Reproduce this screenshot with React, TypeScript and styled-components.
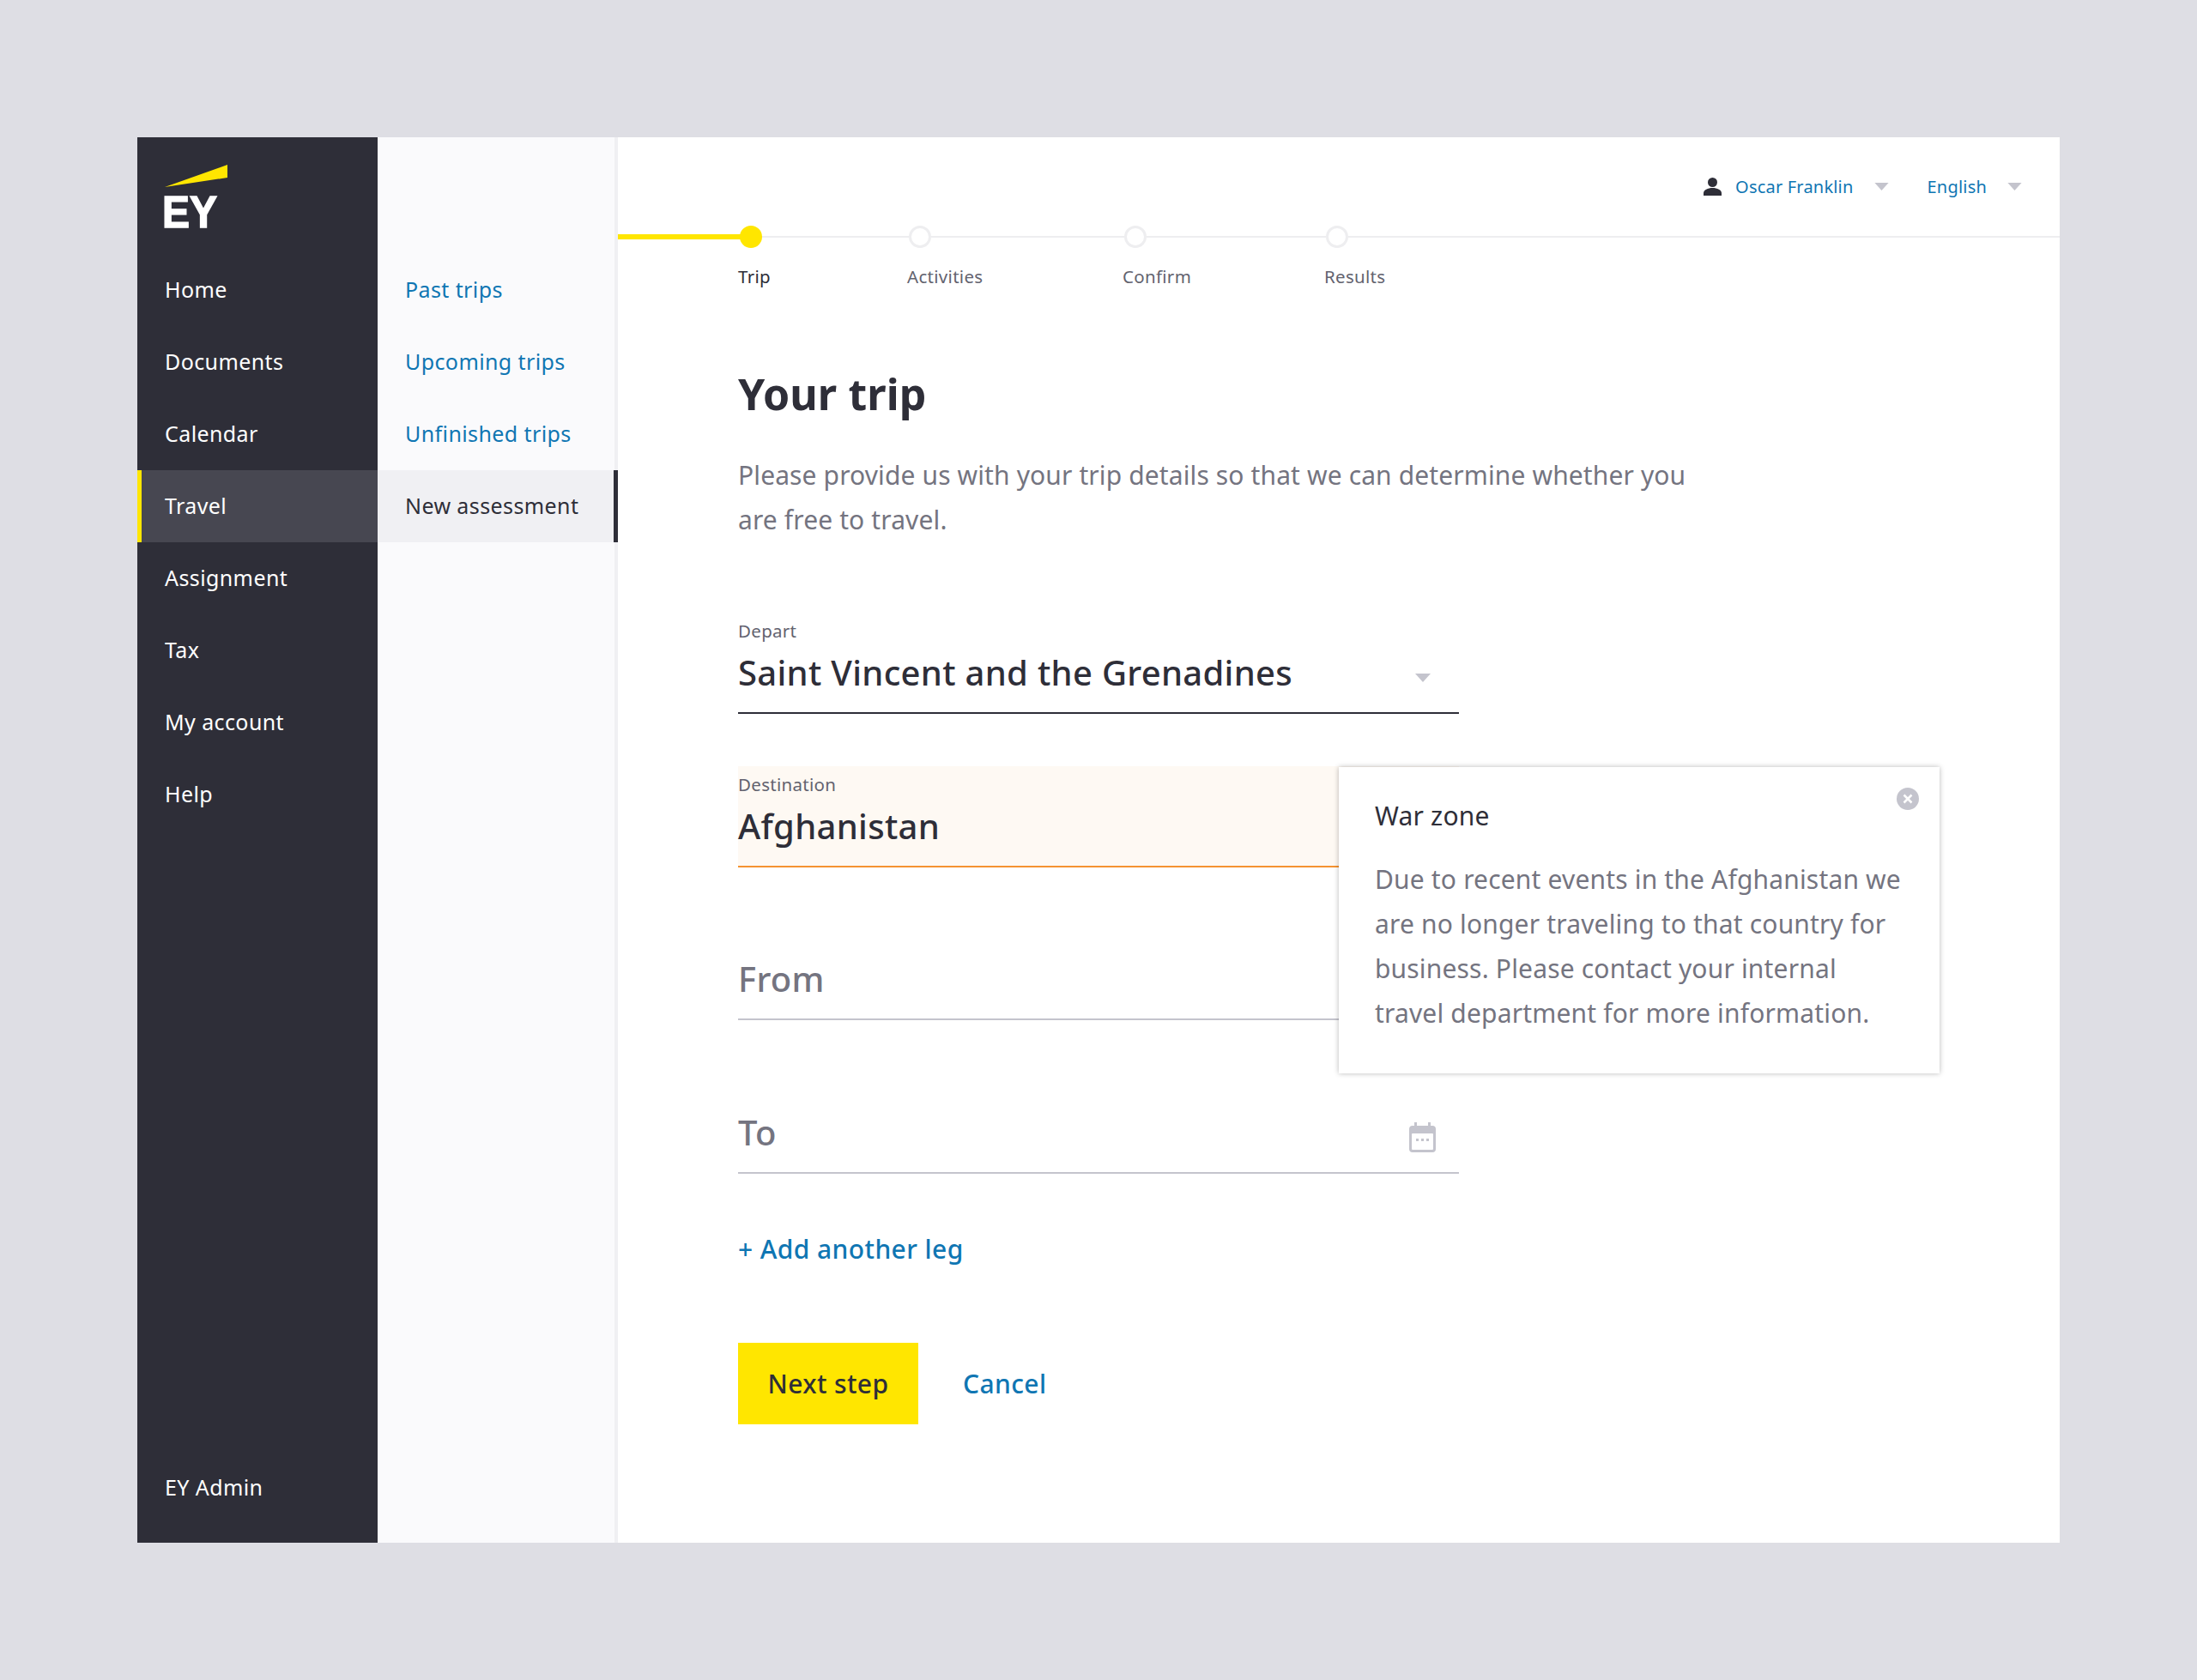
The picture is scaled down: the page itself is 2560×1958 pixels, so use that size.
import React, { ReactElement } from 'react'
import styled, { createGlobalStyle } from 'styled-components'

const GlobalStyle = createGlobalStyle`
  html, body {
    margin: 0;
    padding: 0;
    background: #dedee4;
    font-family: "Noto Sans", "Open Sans", sans-serif;
  }
  * { box-sizing: border-box; }
`

const Page = styled.div`
  width: 2560px;
  height: 1958px;
  padding: 160px;
  background: #dedee4;
`

const Frame = styled.div`
  display: flex;
  height: 1638px;
  background: #fff;
`

const Sidebar = styled.nav`
  display: flex;
  flex-direction: column;
  flex: 0 0 280px;
  padding: 32px 0 22px;
  background: #2e2e38;
`

const Logo = styled.svg`
  display: block;
  width: 76px;
  height: 74px;
  margin: 0 0 30px 30px;
  overflow: visible;
`

const SideItem = styled.a<{ $active?: boolean; $bottom?: boolean }>`
  display: flex;
  align-items: center;
  height: 84px;
  padding: 0 0 2px ${p => (p.$active ? '27px' : '32px')};
  margin-top: ${p => (p.$bottom ? 'auto' : '0')};
  border-left: ${p => (p.$active ? '5px solid #ffe600' : 'none')};
  background: ${p => (p.$active ? '#474751' : 'transparent')};
  color: #fff;
  font-size: 25px;
  letter-spacing: 0.4px;
`

const SubNav = styled.nav`
  flex: 0 0 280px;
  padding-top: 136px;
  border-right: 4px solid #f0f0f3;
  background: #fafafc;
`

const SubItem = styled.a<{ $active?: boolean }>`
  display: flex;
  align-items: center;
  height: 84px;
  padding: 0 0 2px 32px;
  margin-right: ${p => (p.$active ? '-4px' : '0')};
  border-right: ${p => (p.$active ? '5px solid #2e2e38' : 'none')};
  background: ${p => (p.$active ? '#f0f0f3' : 'transparent')};
  color: ${p => (p.$active ? '#2e2e38' : '#0f76b3')};
  font-size: 25px;
  letter-spacing: 0.4px;
`

const Main = styled.main`
  flex: 1;
  min-width: 0;
`

const TopBar = styled.div`
  display: flex;
  align-items: center;
  justify-content: flex-end;
  height: 115px;
  padding-right: 44px;
`

const UserIcon = styled.svg`
  width: 21px;
  height: 21px;
  margin-right: 16px;
`

const TopLink = styled.a`
  color: #0f76b3;
  font-size: 20px;
  letter-spacing: 0.2px;
`

const TopCaret = styled.svg<{ $gapAfter?: number }>`
  width: 17px;
  height: 9px;
  margin-left: 24px;
  margin-right: ${p => p.$gapAfter ?? 0}px;
`

const Stepper = styled.div`
  position: relative;
  display: grid;
  grid-template-columns: 197px 251px 235px auto;
  padding-left: 140px;
  border-top: 2px solid #eeeef0;
`

const Progress = styled.div`
  position: absolute;
  left: 0;
  top: -4px;
  width: 150px;
  height: 6px;
  background: #ffe600;
`

const Step = styled.div`
  display: flex;
  flex-direction: column;
  align-items: flex-start;
`

const Dot = styled.span<{ $done?: boolean }>`
  position: relative;
  width: 26px;
  height: 26px;
  margin: -14px 0 0 2px;
  border-radius: 50%;
  border: 3px solid ${p => (p.$done ? '#ffe600' : '#eeeef0')};
  background: ${p => (p.$done ? '#ffe600' : '#fff')};
`

const StepLabel = styled.span<{ $done?: boolean }>`
  margin-top: 18px;
  color: ${p => (p.$done ? '#2e2e38' : '#63636f')};
  font-size: 20.5px;
  line-height: 30px;
  letter-spacing: 0.3px;
`

const Content = styled.div`
  position: relative;
  padding-left: 140px;
`

const Title = styled.h1`
  margin: 90px 0 0;
  color: #2e2e38;
  font-size: 50px;
  font-weight: 700;
  line-height: 64px;
  letter-spacing: 0.1px;
`

const Intro = styled.p`
  width: 1120px;
  margin: 37px 0 82px;
  color: #747480;
  font-size: 30px;
  line-height: 52px;
  letter-spacing: 0.12px;
`

const Field = styled.div<{ $tone?: 'dark' | 'warn' | 'empty' }>`
  display: flex;
  align-items: flex-end;
  justify-content: space-between;
  width: 840px;
  height: 118px;
  margin-bottom: 60.5px;
  border-bottom: 2px solid
    ${p => (p.$tone === 'dark' ? '#2e2e38' : p.$tone === 'warn' ? '#f59331' : '#c4c4cd')};
  background: ${p => (p.$tone === 'warn' ? '#fef9f3' : 'transparent')};
`

const FieldText = styled.div`
  display: flex;
  flex-direction: column;
  padding-bottom: 18px;
`

const FieldLabel = styled.span`
  color: #63636f;
  font-size: 20.5px;
  line-height: 30px;
  letter-spacing: 0.3px;
`

const FieldValue = styled.span<{ $empty?: boolean }>`
  margin-top: 6px;
  color: ${p => (p.$empty ? '#747480' : '#2e2e38')};
  font-size: 40px;
  font-weight: 500;
  line-height: 56px;
  letter-spacing: 0.3px;
`

const SelectCaret = styled.svg`
  width: 18px;
  height: 10px;
  margin: 0 33px 35px 0;
`

const CalendarIcon = styled.svg`
  width: 31px;
  height: 35px;
  margin: 0 27px 23px 0;
`

const AddLeg = styled.a`
  display: block;
  margin-top: 66px;
  color: #0f76b3;
  font-size: 30px;
  font-weight: 500;
  line-height: 44px;
  letter-spacing: 0.4px;
`

const Actions = styled.div`
  display: flex;
  align-items: center;
  gap: 52px;
  margin-top: 87px;
`

const PrimaryButton = styled.button`
  width: 210px;
  height: 95px;
  border: 0;
  background: #ffe600;
  color: #2e2e38;
  font-family: inherit;
  font-size: 30px;
  font-weight: 500;
  letter-spacing: 0.4px;
`

const CancelLink = styled.a`
  color: #0f76b3;
  font-size: 30px;
  font-weight: 500;
  letter-spacing: 0.4px;
`

const Popover = styled.aside`
  position: absolute;
  left: 840px;
  top: 467px;
  width: 700px;
  height: 357px;
  padding: 31px 40px 0 42px;
  background: #fff;
  box-shadow: 0 0 6px rgba(0, 0, 0, 0.28);
`

const PopoverTitle = styled.h2`
  margin: 0;
  color: #2e2e38;
  font-size: 30px;
  font-weight: 400;
  line-height: 52px;
  letter-spacing: 0.2px;
`

const PopoverBody = styled.p`
  margin: 22px 0 0;
  color: #747480;
  font-size: 30px;
  line-height: 52px;
  letter-spacing: 0.17px;
`

const CloseIcon = styled.svg`
  position: absolute;
  top: 24px;
  right: 24px;
  width: 26px;
  height: 26px;
`

const sideItems = ['Home', 'Documents', 'Calendar', 'Travel', 'Assignment', 'Tax', 'My account', 'Help']
const subItems = ['Past trips', 'Upcoming trips', 'Unfinished trips', 'New assessment']
const steps = ['Trip', 'Activities', 'Confirm', 'Results']

const Triangle = (): ReactElement => <polygon points='0,0 18,0 9,10' fill='#c4c4cd' />

const App = (): ReactElement => {
  return (
    <Page>
      <GlobalStyle />
      <Frame>
        <Sidebar>
          <Logo viewBox='0 0 76 74'>
            <polygon points='2,26 75,0 75,15' fill='#ffe600' />
            <text
              x='-1'
              y='73'
              fill='#fff'
              stroke='#fff'
              strokeWidth='1.5'
              fontFamily='"Liberation Sans", sans-serif'
              fontSize='52'
              fontWeight='700'
              textLength='64'
              lengthAdjust='spacingAndGlyphs'
            >
              EY
            </text>
          </Logo>
          {sideItems.map(item => (
            <SideItem key={item} $active={item === 'Travel'}>{item}</SideItem>
          ))}
          <SideItem $bottom>EY Admin</SideItem>
        </Sidebar>
        <SubNav>
          {subItems.map(item => (
            <SubItem key={item} $active={item === 'New assessment'}>{item}</SubItem>
          ))}
        </SubNav>
        <Main>
          <TopBar>
            <UserIcon viewBox='0 0 21 21'>
              <circle cx='10.5' cy='5.5' r='5.5' fill='#2e2e38' />
              <path d='M0 21v-3c0-3.5 5-6 10.5-6S21 14.500 21 18v3z' fill='#2e2e38' />
            </UserIcon>
            <TopLink>Oscar Franklin</TopLink>
            <TopCaret viewBox='0 0 18 10' $gapAfter={45}><Triangle /></TopCaret>
            <TopLink>English</TopLink>
            <TopCaret viewBox='0 0 18 10'><Triangle /></TopCaret>
          </TopBar>
          <Stepper>
            <Progress />
            {steps.map((step, i) => (
              <Step key={step}>
                <Dot $done={i === 0} />
                <StepLabel $done={i === 0}>{step}</StepLabel>
              </Step>
            ))}
          </Stepper>
          <Content>
            <Title>Your trip</Title>
            <Intro>
              Please provide us with your trip details so that we can determine whether you are free to travel.
            </Intro>
            <Field $tone='dark'>
              <FieldText>
                <FieldLabel>Depart</FieldLabel>
                <FieldValue>Saint Vincent and the Grenadines</FieldValue>
              </FieldText>
              <SelectCaret viewBox='0 0 18 10'><Triangle /></SelectCaret>
            </Field>
            <Field $tone='warn'>
              <FieldText>
                <FieldLabel>Destination</FieldLabel>
                <FieldValue>Afghanistan</FieldValue>
              </FieldText>
            </Field>
            <Field $tone='empty'>
              <FieldText>
                <FieldValue $empty>From</FieldValue>
              </FieldText>
            </Field>
            <Field $tone='empty'>
              <FieldText>
                <FieldValue $empty>To</FieldValue>
              </FieldText>
              <CalendarIcon viewBox='0 0 31 35'>
                <rect x='0' y='4' width='31' height='31' rx='4' fill='#c4c4cd' />
                <rect x='6' y='0' width='3' height='6' fill='#c4c4cd' />
                <rect x='22' y='0' width='3' height='6' fill='#c4c4cd' />
                <rect x='3' y='13' width='25' height='19' rx='1' fill='#fff' />
                <rect x='8' y='19' width='3' height='3' fill='#c4c4cd' />
                <rect x='14' y='19' width='3' height='3' fill='#c4c4cd' />
                <rect x='20' y='19' width='3' height='3' fill='#c4c4cd' />
              </CalendarIcon>
            </Field>
            <AddLeg>+ Add another leg</AddLeg>
            <Actions>
              <PrimaryButton>Next step</PrimaryButton>
              <CancelLink>Cancel</CancelLink>
            </Actions>
            <Popover>
              <CloseIcon viewBox='0 0 26 26'>
                <circle cx='13' cy='13' r='13' fill='#c4c4cd' />
                <path d='M8.500 8.500l9 9M17.500 8.500l-9 9' stroke='#fff' strokeWidth='2.500' />
              </CloseIcon>
              <PopoverTitle>War zone</PopoverTitle>
              <PopoverBody>
                Due to recent events in the Afghanistan we are no longer traveling to that country for business. Please contact your internal travel department for more information.
              </PopoverBody>
            </Popover>
          </Content>
        </Main>
      </Frame>
    </Page>
  )
}

export default App
